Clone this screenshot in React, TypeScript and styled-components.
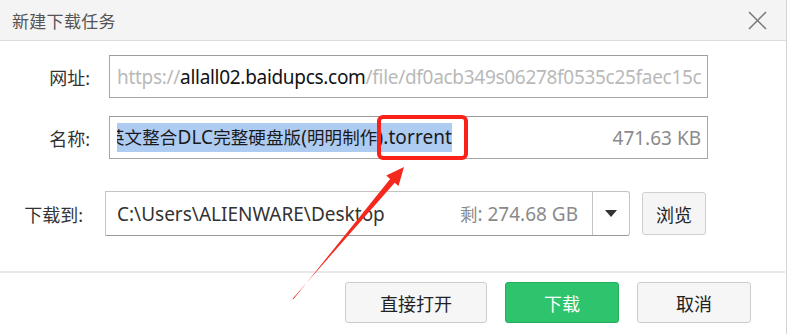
import React from 'react';
import styled, { createGlobalStyle } from 'styled-components';

const GlobalStyle = createGlobalStyle`
  html, body {
    margin: 0;
    padding: 0;
    background: #ffffff;
  }
  body {
    font-family: "Noto Sans", "Noto Sans CJK SC", sans-serif;
  }
`;

const FONT = `"Noto Sans", "Noto Sans CJK SC", sans-serif`;

const Dialog = styled.div`
  position: relative;
  width: 786px;
  height: 334px;
  border-right: 1px solid #d4d4d4;
  background: #ffffff;
  display: flex;
  flex-direction: column;
  font-family: ${FONT};
  overflow: hidden;
`;

const TitleBar = styled.div`
  height: 41px;
  box-sizing: border-box;
  background: #f4f4f4;
  border-bottom: 1px solid #dcdcdc;
  display: flex;
  align-items: center;
  justify-content: space-between;
  padding: 0 19px 0 12px;
`;

const Title = styled.span`
  font-size: 17px;
  color: #555555;
  letter-spacing: 0.3px;
`;

const CloseButton = styled.div`
  width: 20px;
  height: 20px;
  display: flex;
  align-items: center;
  justify-content: center;
`;

const Body = styled.div`
  flex: 1;
  display: flex;
  flex-direction: column;
  padding-top: 14px;
`;

const Row = styled.div<{ $top?: number; $gap: number }>`
  display: flex;
  align-items: center;
  gap: ${({ $gap }) => $gap}px;
  margin-top: ${({ $top }) => $top ?? 0}px;
`;

const Label = styled.span<{ $width: number }>`
  width: ${({ $width }) => $width}px;
  text-align: right;
  font-size: 18px;
  color: #333333;
  flex-shrink: 0;
`;

const Field = styled.div<{ $width: number }>`
  width: ${({ $width }) => $width}px;
  height: 43px;
  box-sizing: border-box;
  border: 1px solid #a6a6a6;
  border-top-color: #9c9c9c;
  background: #ffffff;
  display: flex;
  align-items: center;
  padding: 0 6px 0 7px;
  overflow: hidden;
  white-space: nowrap;
  font-size: 19px;
`;

const Clip = styled.div<{ $spacing?: number }>`
  flex: 1;
  min-width: 0;
  overflow: hidden;
  white-space: nowrap;
  letter-spacing: ${({ $spacing }) => $spacing ?? 0}px;
`;

const Faint = styled.span`
  color: #b9b9b9;
`;

const Strong = styled.span`
  color: #111111;
`;

const Han = styled.span`
  font-size: 17.5px;
`;

const Selected = styled.span`
  display: inline-block;
  margin-left: -10px;
  background: #aecbf2;
  color: #1a1a1a;
  line-height: 29px;
  letter-spacing: 0.1px;
`;

const Size = styled.span`
  color: #8a8a8a;
  margin-left: 12px;
  flex-shrink: 0;
`;

const Combo = styled.div`
  width: 525px;
  height: 45px;
  box-sizing: border-box;
  border: 1px solid #c4c4c4;
  border-bottom-color: #9a9a9a;
  border-radius: 0 3px 3px 0;
  display: flex;
  align-items: stretch;
  font-size: 19px;
`;

const ComboText = styled.div`
  flex: 1;
  display: flex;
  align-items: center;
  justify-content: space-between;
  padding: 0 14px 0 11px;
  color: #333333;
`;

const Free = styled.span`
  color: #8a8a8a;
`;

const Caret = styled.div`
  width: 36px;
  border-left: 1px solid #c4c4c4;
  display: flex;
  align-items: center;
  justify-content: center;
`;

const SmallButton = styled.button`
  width: 64px;
  height: 43px;
  box-sizing: border-box;
  border: 1px solid #cfcfcf;
  border-radius: 3px;
  background: #f5f5f5;
  font-family: ${FONT};
  font-size: 18px;
  color: #222222;
  padding: 0;
`;

const Footer = styled.div`
  height: 63px;
  box-sizing: border-box;
  border-top: 2px solid #e8e8e8;
  margin-right: 1px;
  display: flex;
  justify-content: flex-end;
  gap: 18px;
  padding: 9px 34px 0 0;
`;

const ActionButton = styled.button<{ $primary?: boolean; $width: number }>`
  width: ${({ $width }) => $width}px;
  height: 41px;
  box-sizing: border-box;
  border-radius: 3px;
  font-family: ${FONT};
  font-size: 18px;
  padding: 0;
  border: 1px solid ${({ $primary }) => ($primary ? '#25ad5e' : '#cccccc')};
  background: ${({ $primary }) => ($primary ? '#2ec46e' : '#f6f6f6')};
  color: ${({ $primary }) => ($primary ? '#ffffff' : '#222222')};
`;

const Annotation = styled.svg`
  position: absolute;
  left: 0;
  top: 0;
  pointer-events: none;
`;

export default function App() {
  return (
    <>
      <GlobalStyle />
      <Dialog>
        <TitleBar>
          <Title>新建下载任务</Title>
          <CloseButton>
            <svg width="19" height="19" viewBox="0 0 19 19">
              <path d="M1 1 L18 18 M18 1 L1 18" stroke="#777" strokeWidth="1.5" />
            </svg>
          </CloseButton>
        </TitleBar>
        <Body>
          <Row $gap={19}>
            <Label $width={90}>网址:</Label>
            <Field $width={599}>
              <Clip $spacing={-0.3}>
                <Faint>https://</Faint>
                <Strong>allall02.baidupcs.com</Strong>
                <Faint>/file/df0acb349s06278f0535c25faec15c8e2a9</Faint>
              </Clip>
            </Field>
          </Row>
          <Row $gap={19} $top={18}>
            <Label $width={90}>名称:</Label>
            <Field $width={599}>
              <Clip>
                <Selected>
                  <Han>英文整合</Han>DLC<Han>完整硬盘版</Han>(<Han>明明制作</Han>).torrent
                </Selected>
              </Clip>
              <Size>471.63 KB</Size>
            </Field>
          </Row>
          <Row $gap={22} $top={32}>
            <Label $width={83}>下载到:</Label>
            <Combo>
              <ComboText>
                <span>C:\Users\ALIENWARE\Desktop</span>
                <Free>
                  <Han>剩</Han>: 274.68 GB
                </Free>
              </ComboText>
              <Caret>
                <svg width="12" height="7" viewBox="0 0 12 7">
                  <path d="M0 0 H12 L6 7 Z" fill="#333" />
                </svg>
              </Caret>
            </Combo>
            <SmallButton style={{ marginLeft: -10 }}>浏览</SmallButton>
          </Row>
        </Body>
        <Footer>
          <ActionButton $width={142}>直接打开</ActionButton>
          <ActionButton $width={114} $primary>
            下载
          </ActionButton>
          <ActionButton $width={114}>取消</ActionButton>
        </Footer>
        <Annotation width="788" height="334" viewBox="0 0 788 334">
          <rect x="379" y="117" width="87" height="41" rx="4" fill="none" stroke="#fa2218" strokeWidth="4" />
          <polygon
            points="293.4,299.3 390.1,178.9 386.3,175.6 404,167 398.5,186 394.7,182.7 292.6,298.7"
            fill="#f5281d"
          />
        </Annotation>
      </Dialog>
    </>
  );
}
